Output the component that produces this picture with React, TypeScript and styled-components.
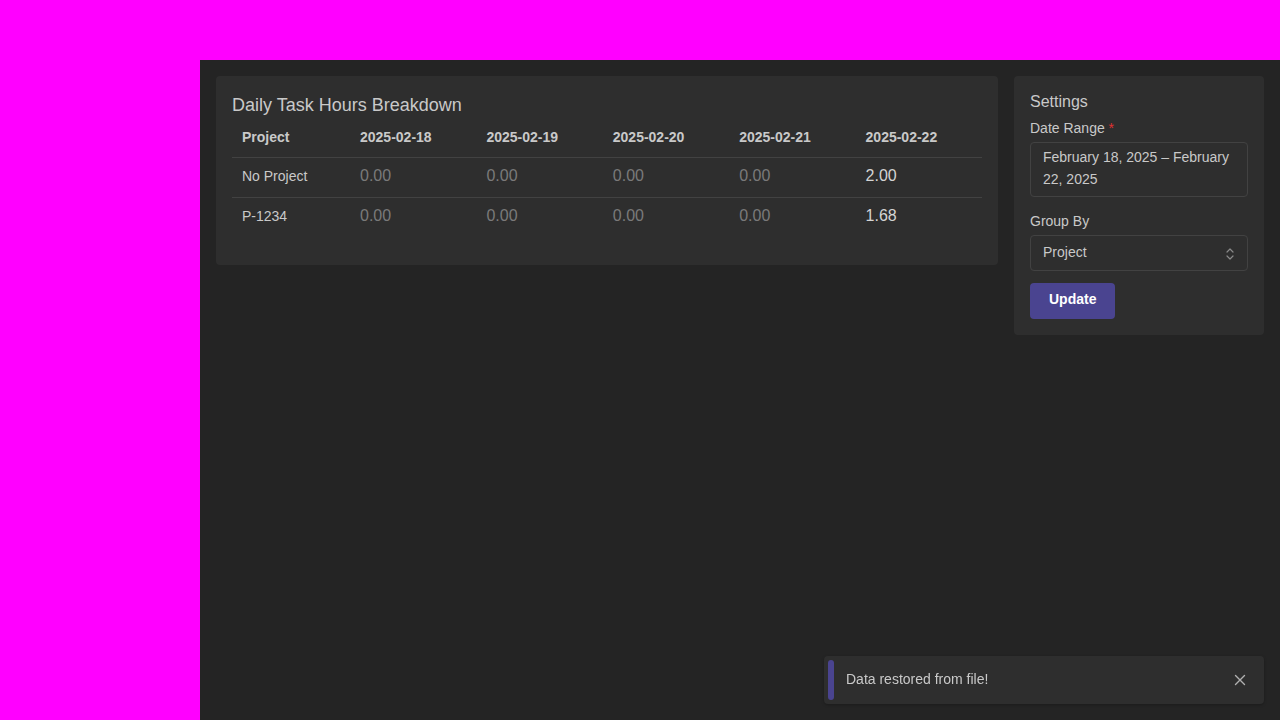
import React from 'react'
import styled, { createGlobalStyle } from 'styled-components'

const GlobalStyle = createGlobalStyle`
  html, body {
    margin: 0;
    padding: 0;
    background: #ff00ff;
    font-family: "Liberation Sans", Arial, sans-serif;
    -webkit-font-smoothing: antialiased;
  }
  * { box-sizing: border-box; }
`

const dates = ['2025-02-18', '2025-02-19', '2025-02-20', '2025-02-21', '2025-02-22']

const rows = [
  { project: 'No Project', hours: [0, 0, 0, 0, 2] },
  { project: 'P-1234', hours: [0, 0, 0, 0, 1.68] },
]

const App = () => {
  return (
    <Shell>
      <GlobalStyle />
      <Header />
      <Body>
        <Sidebar />
        <Main>
          <Card>
            <CardTitle>Daily Task Hours Breakdown</CardTitle>
            <Table>
              <colgroup>
                <col style={{ width: 118 }} />
                {dates.map(d => <col key={d} />)}
              </colgroup>
              <thead>
                <tr>
                  <Th>Project</Th>
                  {dates.map(d => <Th key={d}>{d}</Th>)}
                </tr>
              </thead>
              <tbody>
                {rows.map((r, i) => (
                  <Row key={r.project} last={i === rows.length - 1}>
                    <NameCell>{r.project}</NameCell>
                    {r.hours.map((h, j) => (
                      <ValueCell key={j} zero={h === 0}>{h.toFixed(2)}</ValueCell>
                    ))}
                  </Row>
                ))}
              </tbody>
            </Table>
          </Card>

          <SideCard>
            <SideTitle>Settings</SideTitle>
            <Field>
              <Label>Date Range <Required>*</Required></Label>
              <DateInput>February 18, 2025 – February 22, 2025</DateInput>
            </Field>
            <Field>
              <Label>Group By</Label>
              <SelectBox>
                <span>Project</span>
                <svg width="12" height="16" viewBox="0 0 12 16" fill="none" stroke="#8a8a8a" strokeWidth="1.2" strokeLinecap="round" strokeLinejoin="round">
                  <path d="M3 6 L6 3 L9 6" />
                  <path d="M3 10 L6 13 L9 10" />
                </svg>
              </SelectBox>
            </Field>
            <Button>Update</Button>
          </SideCard>
        </Main>
      </Body>

      <Toast>
        <Accent />
        <ToastText>Data restored from file!</ToastText>
        <CloseButton aria-label="close">
          <svg width="14" height="14" viewBox="0 0 14 14" stroke="#b0b0b0" strokeWidth="1.4" strokeLinecap="round">
            <path d="M2.5 2.5 L11.5 11.5 M11.5 2.5 L2.5 11.5" />
          </svg>
        </CloseButton>
      </Toast>
    </Shell>
  )
}

const Shell = styled.div`
  display: flex;
  flex-direction: column;
  height: 720px;
  overflow: hidden;
`

const Header = styled.div`
  height: 60px;
  background: #ff00ff;
  flex-shrink: 0;
`

const Body = styled.div`
  display: flex;
  flex: 1;
`

const Sidebar = styled.div`
  width: 200px;
  background: #ff00ff;
  flex-shrink: 0;
`

const Main = styled.main`
  flex: 1;
  background: #242424;
  padding: 16px;
  display: flex;
  align-items: flex-start;
  gap: 16px;
`

const Card = styled.section`
  flex: 1;
  background: #2e2e2e;
  border-radius: 4px;
  padding: 16px 16px 28px;
`

const CardTitle = styled.h2`
  margin: 0;
  font-size: 18px;
  font-weight: 400;
  line-height: 26px;
  color: #c9c9c9;
`

const Table = styled.table`
  width: 100%;
  border-collapse: collapse;
  table-layout: fixed;
`

const Th = styled.th`
  text-align: left;
  font-size: 14px;
  font-weight: 700;
  color: #c9c9c9;
  padding: 0 10px;
  height: 39px;
  border-bottom: 1px solid #424242;
`

const Row = styled.tr<{ last?: boolean }>`
  height: 40px;
  border-bottom: ${p => (p.last ? 'none' : '1px solid #424242')};
`

const NameCell = styled.td`
  font-size: 14px;
  color: #c9c9c9;
  padding: 0 10px 2px;
`

const ValueCell = styled.td<{ zero?: boolean }>`
  font-size: 16px;
  color: ${p => (p.zero ? '#7a7a7a' : '#d4d4d4')};
  padding: 0 10px 2px;
`

const SideCard = styled.aside`
  width: 250px;
  flex-shrink: 0;
  background: #2e2e2e;
  border-radius: 4px;
  padding: 16px;
  display: flex;
  flex-direction: column;
`

const SideTitle = styled.h3`
  margin: 0 0 4px;
  font-size: 16px;
  font-weight: 400;
  line-height: 20px;
  color: #c9c9c9;
`

const Field = styled.div`
  display: flex;
  flex-direction: column;
  margin-bottom: 12px;
`

const Label = styled.label`
  font-size: 14px;
  line-height: 20px;
  color: #c9c9c9;
  margin-bottom: 4px;
  margin-top: 2px;
`

const Required = styled.span`
  color: #e03131;
`

const DateInput = styled.div`
  border: 1px solid #424242;
  border-radius: 4px;
  padding: 3px 12px 6px;
  font-size: 14px;
  line-height: 22px;
  color: #c9c9c9;
  background: #2e2e2e;
`

const SelectBox = styled.div`
  height: 36px;
  border: 1px solid #424242;
  border-radius: 4px;
  padding: 0 12px;
  display: flex;
  align-items: center;
  justify-content: space-between;
  font-size: 14px;
  color: #c9c9c9;
  padding-bottom: 3px;

  svg {
    margin-top: 4px;
    margin-right: -1px;
  }
`

const Button = styled.button`
  align-self: flex-start;
  height: 36px;
  padding: 0 19px;
  border: none;
  border-radius: 4px;
  background: #4a4490;
  color: #ffffff;
  font-family: inherit;
  font-size: 14px;
  font-weight: 700;
  padding-bottom: 4px;
`

const Toast = styled.div`
  position: fixed;
  right: 16px;
  bottom: 16px;
  width: 440px;
  height: 48px;
  background: #2e2e2e;
  border-radius: 4px;
  display: flex;
  align-items: center;
  padding: 4px;
  box-shadow: 0 1px 3px rgba(0, 0, 0, 0.25);
`

const Accent = styled.div`
  width: 6px;
  align-self: stretch;
  border-radius: 3px;
  background: #4a4490;
`

const ToastText = styled.span`
  flex: 1;
  margin-left: 12px;
  font-size: 14px;
  color: #c9c9c9;
  padding-bottom: 2px;
`

const CloseButton = styled.button`
  background: none;
  border: none;
  padding: 0;
  margin-right: 13px;
  display: flex;
  align-items: center;
`

export default App
